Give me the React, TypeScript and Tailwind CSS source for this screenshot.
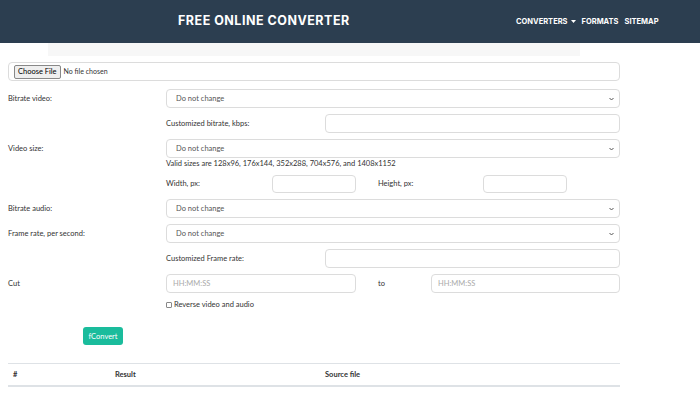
import React from 'react';

const font = { fontFamily: 'Lato, "Open Sans", sans-serif' };

function Select() {
  return (
    <div className="relative flex-1 h-[19px] rounded-[4px] border border-[#dcdcdc] bg-white flex items-center pl-[9px] text-[7.5px] text-[#555]">
      Do not change
      <svg className="absolute right-[5px] top-[7px]" width="5" height="4" viewBox="0 0 5 4">
        <path d="M0.5 1 L2.5 3 L4.5 1" fill="none" stroke="#555" strokeWidth="1" />
      </svg>
    </div>
  );
}

function Input({ className = '', placeholder }: { className?: string; placeholder?: string }) {
  return (
    <div
      className={`h-[19px] rounded-[4px] border border-[#dcdcdc] bg-white flex items-center pl-[6px] text-[7.5px] text-[#aaa] ${className}`}
    >
      {placeholder}
    </div>
  );
}

export default function App() {
  return (
    <div className="w-[700px] h-[395px] bg-white overflow-hidden text-[#333]" style={font}>
      {/* Header */}
      <div className="h-[43px] bg-[#2c3e50] flex items-center">
        <div className="ml-[178px] w-[172px] text-white font-bold text-[12.5px] tracking-[0.5px] whitespace-nowrap" style={{ fontFamily: 'Inter, "DejaVu Sans", sans-serif' }}>
          FREE ONLINE CONVERTER
        </div>
        <div className="ml-[166px] flex items-center gap-[6px] text-white font-bold text-[7.5px] whitespace-nowrap" style={{ fontFamily: 'Inter, "DejaVu Sans", sans-serif' }}>
          <span className="flex items-center gap-[3px]">
            CONVERTERS
            <svg width="5" height="3" viewBox="0 0 5 3">
              <path d="M0 0 L5 0 L2.5 3 Z" fill="#fff" />
            </svg>
          </span>
          <span>FORMATS</span>
          <span>SITEMAP</span>
        </div>
      </div>

      <div className="ml-[48px] w-[532px] h-[13px] bg-[#f7f7f7]" />

      {/* Form */}
      <div className="ml-[8px] w-[612px] flex flex-col text-[7.5px] text-[#333]">
        <div className="mt-[6px] h-[19px] rounded-[4px] border border-[#dcdcdc] flex items-center pl-[5px] gap-[3px]">
          <span className="h-[14px] px-[3px] border border-[#888] rounded-[2px] bg-[#efefef] text-[7.5px] text-black flex items-center">
            Choose File
          </span>
          <span className="text-[7px] text-[#333]">No file chosen</span>
        </div>

        <div className="mt-[8px] flex items-center">
          <div className="w-[158px]">Bitrate video:</div>
          <Select />
        </div>

        <div className="mt-[6px] flex items-center ml-[158px]">
          <div className="w-[159px]">Customized bitrate, kbps:</div>
          <Input className="flex-1" />
        </div>

        <div className="mt-[6px] flex items-center">
          <div className="w-[158px]">Video size:</div>
          <Select />
        </div>
        <div className="ml-[158px] mt-[1px] h-[9px] leading-[9px] text-[7.5px]">
          Valid sizes are 128x96, 176x144, 352x288, 704x576, and 1408x1152
        </div>

        <div className="mt-[7px] flex items-center ml-[158px]">
          <div className="w-[106px]">Width, px:</div>
          <Input className="w-[84px] !h-[18px]" />
          <div className="ml-[22px] w-[105px]">Height, px:</div>
          <Input className="w-[84px] !h-[18px]" />
        </div>

        <div className="mt-[6px] flex items-center">
          <div className="w-[158px]">Bitrate audio:</div>
          <Select />
        </div>

        <div className="mt-[6px] flex items-center">
          <div className="w-[158px]">Frame rate, per second:</div>
          <Select />
        </div>

        <div className="mt-[6px] flex items-center ml-[158px]">
          <div className="w-[159px]">Customized Frame rate:</div>
          <Input className="flex-1" />
        </div>

        <div className="mt-[6px] flex items-center">
          <div className="w-[158px]">Cut</div>
          <Input className="w-[190px]" placeholder="HH:MM:SS" />
          <div className="ml-[22px] w-[53px]">to</div>
          <Input className="flex-1" placeholder="HH:MM:SS" />
        </div>

        <div className="mt-[6px] ml-[158px] flex items-center gap-[2px] text-[7.5px]">
          <span className="w-[6px] h-[6px] border border-[#888] rounded-[1px]" />
          Reverse video and audio
        </div>

        <div className="mt-[17px] ml-[75px] w-[40px] h-[18px] rounded-[3px] bg-[#1abc9c] text-white text-[7.5px] flex items-center justify-center">
          fConvert
        </div>

        <div className="mt-[18px] border-t border-[#dee2e6] border-b-2 h-[24px] flex items-center font-bold text-[7.5px]">
          <div className="w-[107px] pl-[5px]">#</div>
          <div className="w-[210px]">Result</div>
          <div>Source file</div>
        </div>
      </div>
    </div>
  );
}
